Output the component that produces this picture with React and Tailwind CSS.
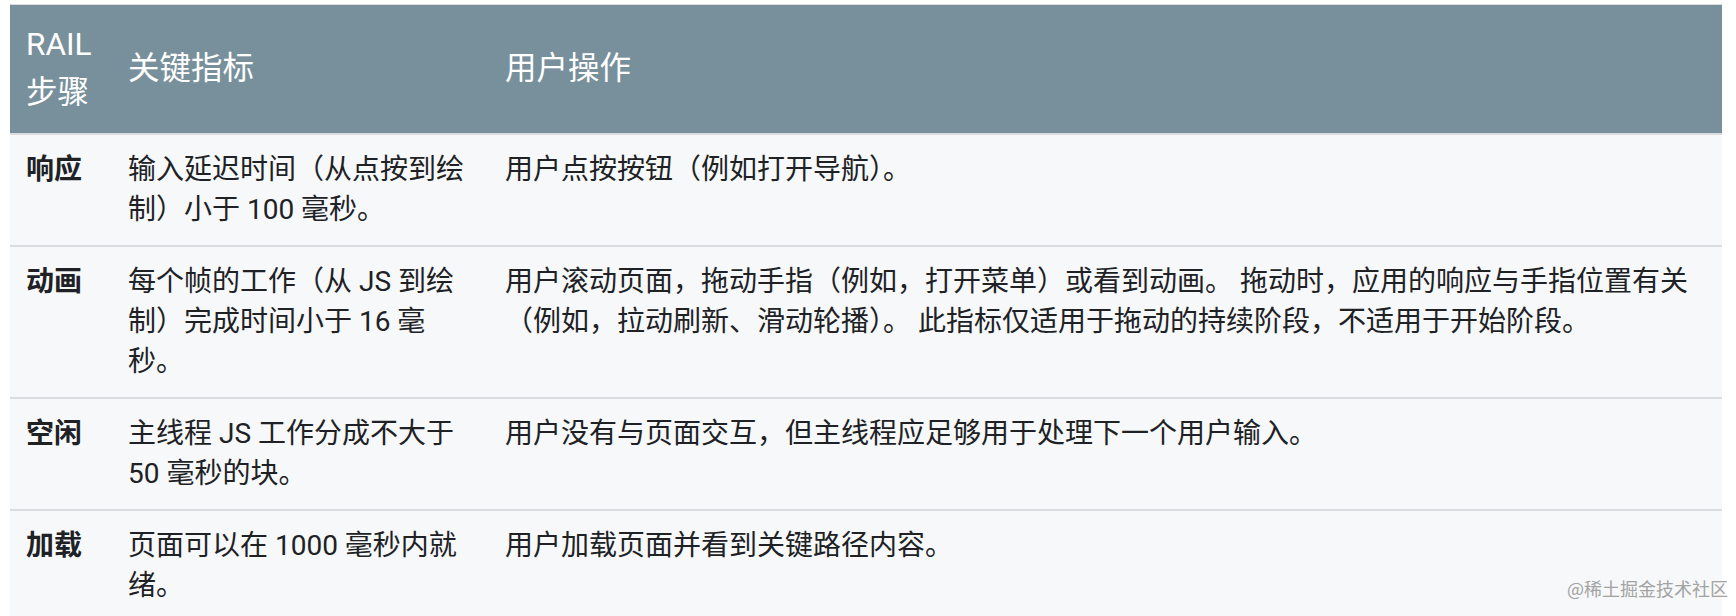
import React from "react";

const rows = [
  {
    step: "响应",
    metric: "输入延迟时间（从点按到绘制）小于 100 毫秒。",
    action: "用户点按按钮（例如打开导航）。",
  },
  {
    step: "动画",
    metric: "每个帧的工作（从 JS 到绘制）完成时间小于 16 毫秒。",
    action:
      "用户滚动页面，拖动手指（例如，打开菜单）或看到动画。 拖动时，应用的响应与手指位置有关（例如，拉动刷新、滑动轮播）。 此指标仅适用于拖动的持续阶段，不适用于开始阶段。",
  },
  {
    step: "空闲",
    metric: "主线程 JS 工作分成不大于 50 毫秒的块。",
    action: "用户没有与页面交互，但主线程应足够用于处理下一个用户输入。",
  },
  {
    step: "加载",
    metric: "页面可以在 1000 毫秒内就绪。",
    action: "用户加载页面并看到关键路径内容。",
  },
];

const App = () => {
  return (
    <div className="relative w-full h-[616px] overflow-hidden bg-white pt-1 pl-[10px] pr-[14px] font-['Roboto','Noto_Sans_CJK_SC',sans-serif]">
      <table className="w-[1712px] table-fixed border-collapse border-t border-[#dadce0]">
        <colgroup>
          <col className="w-[102px]" />
          <col className="w-[377px]" />
          <col />
        </colgroup>
        <thead>
          <tr className="bg-[#78909c] text-white text-[31.5px] leading-[48px] text-left">
            <th className="px-4 py-4 font-normal align-middle">RAIL 步骤</th>
            <th className="px-4 py-4 font-normal align-middle">关键指标</th>
            <th className="px-4 py-4 font-normal align-middle">用户操作</th>
          </tr>
        </thead>
        <tbody>
          {rows.map((row) => (
            <tr
              key={row.step}
              className="bg-[#f6f8f9] border-t-2 border-[#dadce0] text-[28px] leading-[40px] text-[#202124]"
            >
              <td className="px-4 py-[15px] align-top font-bold">{row.step}</td>
              <td className="px-4 py-[15px] align-top">{row.metric}</td>
              <td className="px-4 py-[15px] align-top">{row.action}</td>
            </tr>
          ))}
        </tbody>
      </table>

      {/* watermark */}
      <div className="absolute right-[8px] bottom-[18px] text-[18px] leading-[20px] text-[#a3a3a3] font-['Noto_Sans_CJK_SC',sans-serif]">
        @稀土掘金技术社区
      </div>
    </div>
  );
};

export default App;
